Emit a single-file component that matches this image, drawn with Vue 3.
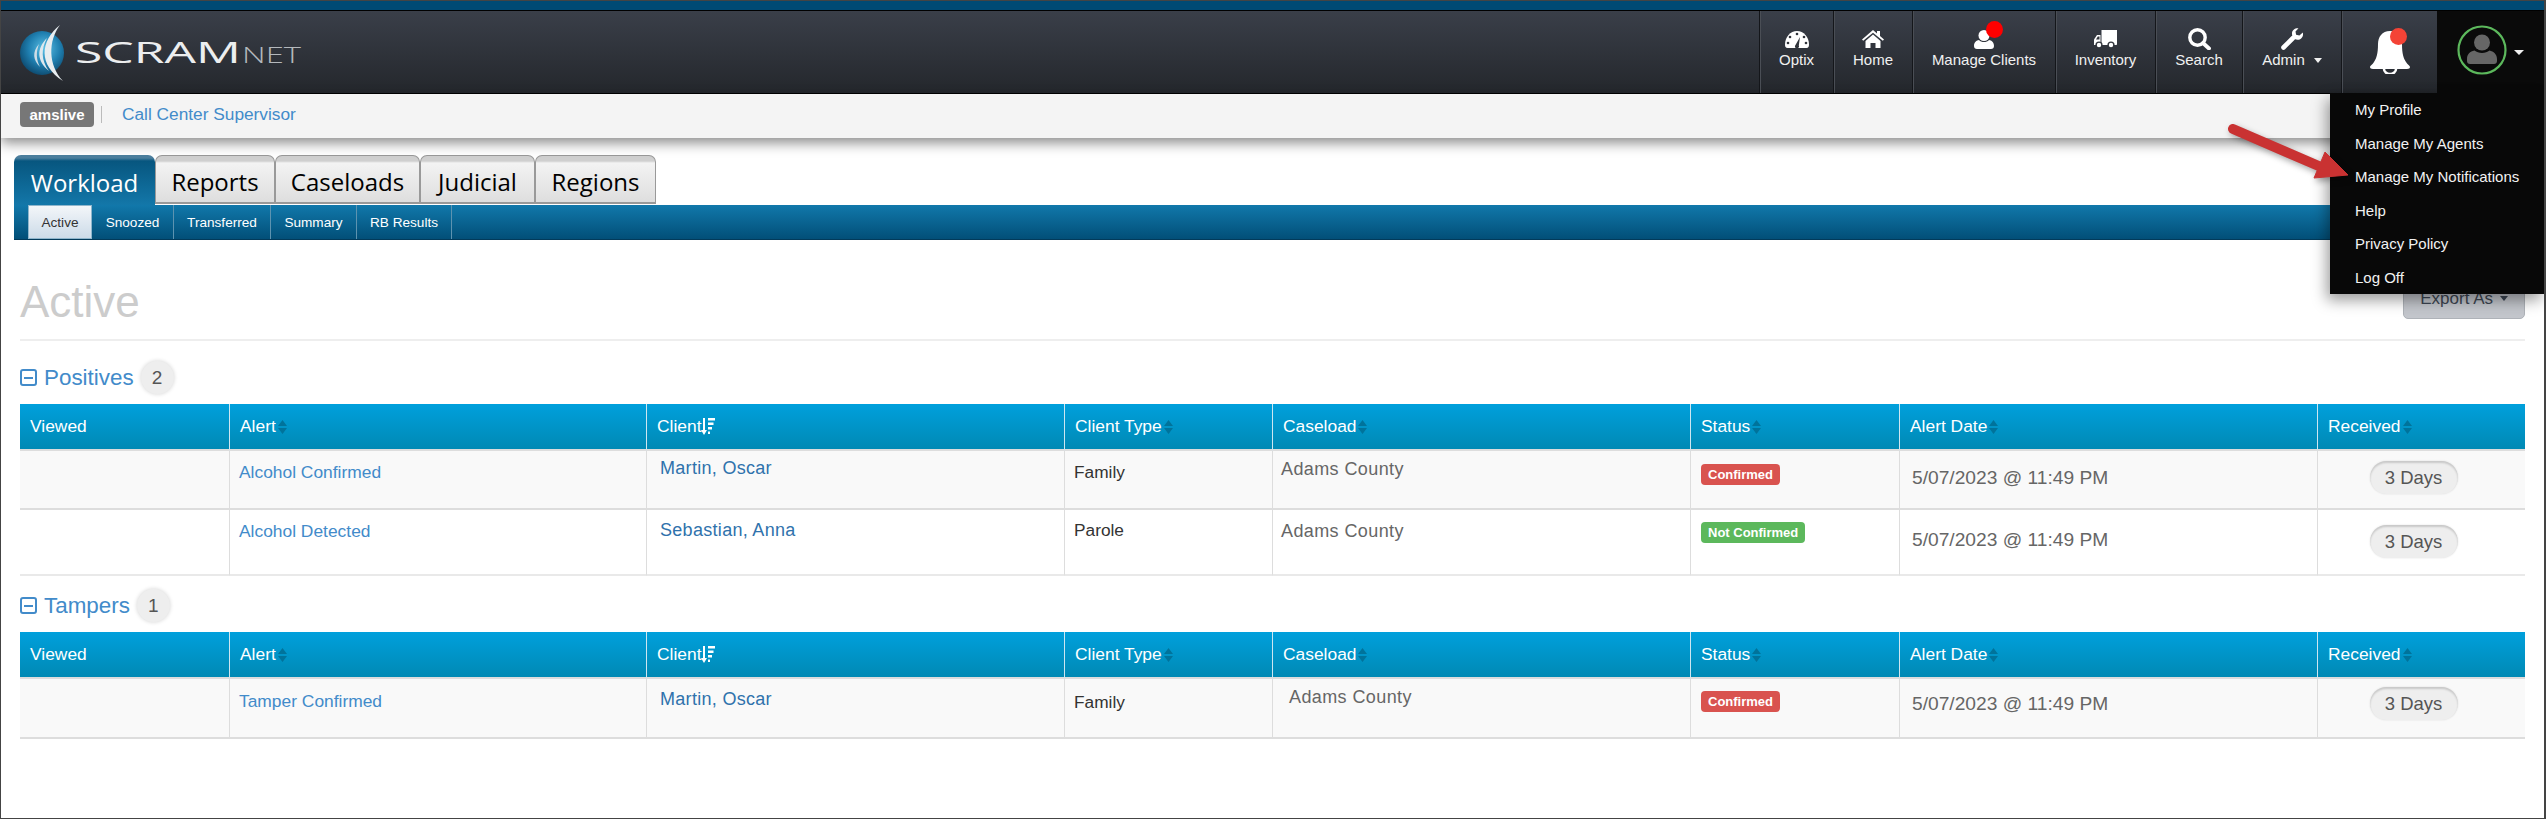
<script setup>
const navItems = [
  { icon: 'gauge', label: 'Optix' },
  { icon: 'home', label: 'Home' },
  { icon: 'user', label: 'Manage Clients', dot: true },
  { icon: 'truck', label: 'Inventory' },
  { icon: 'search', label: 'Search' },
  { icon: 'wrench', label: 'Admin', caret: true }
]
const tabs = ['Workload', 'Reports', 'Caseloads', 'Judicial', 'Regions']
const subTabs = ['Active', 'Snoozed', 'Transferred', 'Summary', 'RB Results']
const menu = ['My Profile', 'Manage My Agents', 'Manage My Notifications', 'Help', 'Privacy Policy', 'Log Off']
const columns = [
  { label: 'Viewed', width: 209 },
  { label: 'Alert', width: 417, sort: 'both' },
  { label: 'Client', width: 418, sort: 'desc' },
  { label: 'Client Type', width: 208, sort: 'both' },
  { label: 'Caseload', width: 418, sort: 'both' },
  { label: 'Status', width: 209, sort: 'both' },
  { label: 'Alert Date', width: 418, sort: 'both' },
  { label: 'Received', width: 208, sort: 'both' }
]
const sections = [
  {
    title: 'Positives', count: 2, cls: 'first',
    rows: [
      { cls: 'r1', alert: 'Alcohol Confirmed', client: 'Martin, Oscar', type: 'Family', status: 'Confirmed', ok: false },
      { cls: 'r2', alert: 'Alcohol Detected', client: 'Sebastian, Anna', type: 'Parole', status: 'Not Confirmed', ok: true }
    ]
  },
  {
    title: 'Tampers', count: 1, cls: 'second',
    rows: [
      { cls: 'r3', alert: 'Tamper Confirmed', client: 'Martin, Oscar', type: 'Family', status: 'Confirmed', ok: false }
    ]
  }
]
</script>

<template>
  <div class="frame">
    <div class="strip"></div>
    <header class="topbar">
      <div class="logo">
        <svg width="290" height="62" viewBox="0 0 290 62">
          <defs>
            <radialGradient id="globe" cx="0.55" cy="0.4" r="0.65">
              <stop offset="0" stop-color="#5cc0e6" />
              <stop offset="0.55" stop-color="#1f7fb0" />
              <stop offset="1" stop-color="#0b4468" />
            </radialGradient>
          </defs>
          <circle cx="22" cy="32" r="22" fill="url(#globe)" />
          <path d="M40 4 C20 20 18 44 43 60 C28 44 28 20 40 4Z" fill="#e8edf0" />
          <path d="M27 17 C16 28 17 40 29 50 C21 39 21 28 27 17Z" fill="#dfe8ee" />
          <path d="M19 23 C12 31 13 39 20 46 C16 38 16 31 19 23Z" fill="#cfdde6" />
          <text x="55" y="42" class="logo-main" textLength="166" lengthAdjust="spacingAndGlyphs">SCRAM</text>
          <text x="222" y="42" class="logo-sub" textLength="59" lengthAdjust="spacingAndGlyphs">NET</text>
        </svg>
      </div>
      <nav class="nav">
        <a v-for="item in navItems" :key="item.label" class="nav-item">
          <span class="nav-icon">
            <svg v-if="item.icon === 'gauge'" width="24" height="17" viewBox="0 0 24 17">
              <path d="M0 13.5C0 6 5.4 0 12 0s12 6 12 13.5c0 2-.6 3.500-2.500 3.500H2.500C.6 17 0 15.500 0 13.500Z" fill="#fff" />
              <circle cx="5" cy="6" r="1.300" fill="#30343b" /><circle cx="12" cy="3" r="1.300" fill="#30343b" />
              <circle cx="19" cy="6" r="1.300" fill="#30343b" /><circle cx="3" cy="12" r="1.300" fill="#30343b" />
              <circle cx="21" cy="12" r="1.300" fill="#30343b" />
              <path d="M15 6 L13.800 14.500 A2 2 0 1 1 10.500 14Z" fill="#30343b" />
            </svg>
            <svg v-else-if="item.icon === 'home'" width="22" height="18" viewBox="0 0 22 18">
              <path d="M0 9.500 11 0l4 3.400V1h3v5l4 3.500-1.200 1.300L11 2.700 1.200 10.800Z" fill="#fff" />
              <path d="M3.500 11 11 4.600 18.500 11v7h-5v-5h-5v5h-5Z" fill="#fff" />
            </svg>
            <svg v-else-if="item.icon === 'user'" width="20" height="19" viewBox="0 0 20 19">
              <circle cx="10" cy="5.500" r="5.500" fill="#fff" />
              <path d="M0 16c0-4 2.500-5.500 5-6 1.200 1.400 3 2 5 2s3.800-.6 5-2c2.500.5 5 2 5 6 0 2-1.200 3-3 3H3c-1.800 0-3-1-3-3Z" fill="#fff" />
            </svg>
            <svg v-else-if="item.icon === 'truck'" width="24" height="19" viewBox="0 0 24 19">
              <path d="M7.500 0H23v14c0 .6-.4 1-1 1H7.500Z" fill="#fff" />
              <path d="M6.500 5H3L0 9.500V15h6.500Z" fill="#fff" />
              <circle cx="5" cy="15" r="3.600" fill="#30343b" /><circle cx="5" cy="15" r="2.200" fill="#fff" />
              <circle cx="17" cy="15" r="3.600" fill="#30343b" /><circle cx="17" cy="15" r="2.200" fill="#fff" />
              <path d="M2 9.500 3.800 6.500H5.500V9.500Z" fill="#30343b" />
            </svg>
            <svg v-else-if="item.icon === 'search'" width="23" height="22" viewBox="0 0 23 22">
              <circle cx="9.500" cy="9.500" r="7.700" fill="none" stroke="#fff" stroke-width="3.400" />
              <path d="M15 15 21 20.500" stroke="#fff" stroke-width="3.800" stroke-linecap="round" />
            </svg>
            <svg v-else-if="item.icon === 'wrench'" width="23" height="22" viewBox="0 0 23 22">
              <path d="M2.500 19.500 12 10" stroke="#fff" stroke-width="4.600" stroke-linecap="round" />
              <path d="M11 5.500C11 2 14 0 17.500 0.300L14.500 3.500l.6 3.300 3.300.6L21.800 4.500C23 8.500 20 12 16.500 11.800 13 11.500 11 9 11 5.500Z" fill="#fff" />
            </svg>
            <span v-if="item.dot" class="dot"></span>
          </span>
          <span class="nav-label">{{ item.label }}<i v-if="item.caret" class="caret"></i></span>
        </a>
        <a class="nav-item bell-item">
          <span class="bell-wrap">
            <svg width="42" height="45" viewBox="0 0 42 45">
              <path d="M15 40a6 5 0 0 0 12 0" fill="none" stroke="#fff" stroke-width="2.500" />
              <path d="M21 2C13 2 9 8 9 15c0 10-1.500 14-4 18-1.500 2.500-4 3.500-4 5 0 1.300 1 2 3 2h34c2 0 3-.7 3-2 0-1.500-2.500-2.500-4-5-2.500-4-4-8-4-18 0-7-4-13-12-13Z" fill="#fff" />
            </svg>
            <span class="bell-dot"></span>
          </span>
        </a>
        <div class="user-item">
          <svg width="50" height="50" viewBox="0 0 50 50">
            <circle cx="25" cy="25" r="23.500" fill="none" stroke="#5cb85c" stroke-width="2.200" />
            <circle cx="25" cy="17.500" r="8" fill="#666" />
            <path d="M10 34c0-5 3-7.500 7.500-8.500 2 1.600 4.500 2.500 7.500 2.500s5.500-.9 7.500-2.500C36.500 26.500 40 29 40 34v2c0 2-1.200 3-3 3H13c-1.800 0-3-1-3-3Z" fill="#666" />
          </svg>
          <i class="caret user-caret"></i>
          <ul class="menu">
            <li v-for="m in menu" :key="m">{{ m }}</li>
          </ul>
        </div>
      </nav>
    </header>

    <div class="subbar">
      <span class="env">amslive</span>
      <span class="pipe"></span>
      <a class="role">Call Center Supervisor</a>
    </div>

    <div class="tabs">
      <a v-for="(t, i) in tabs" :key="t" class="tab" :class="{ on: i === 0 }">{{ t }}</a>
    </div>
    <div class="subnav">
      <a v-for="(t, i) in subTabs" :key="t" class="subtab" :class="{ on: i === 0 }">{{ t }}</a>
    </div>

    <main class="page">
      <div class="title-row">
        <h1>Active</h1>
        <button class="export">Export As <i class="caret dark"></i></button>
      </div>

      <section v-for="s in sections" :key="s.title" :class="s.cls">
        <div class="group">
          <span class="minus"></span>
          <span class="group-title">{{ s.title }}</span>
          <span class="count">{{ s.count }}</span>
        </div>
        <table>
          <colgroup>
            <col v-for="c in columns" :key="c.label" :style="{ width: c.width + 'px' }" />
          </colgroup>
          <thead>
            <tr>
              <th v-for="c in columns" :key="c.label">
                <span>{{ c.label }}</span>
                <svg v-if="c.sort === 'both'" class="sort" width="9" height="16" viewBox="0 0 9 16">
                  <path d="M4.500 1 9 7H0ZM4.500 15 0 9h9Z" fill="#00739b" />
                </svg>
                <svg v-else-if="c.sort === 'desc'" class="sort desc" width="14" height="17" viewBox="0 0 14 17">
                  <path d="M2 0h2v12h2l-3 5-3-5h2Z" fill="#fff" />
                  <path d="M7 0h7v2.500H7ZM7 4.500h5.500V7H7ZM7 9h4v2.500H7ZM7 13.500h2V16H7Z" fill="#fff" />
                </svg>
              </th>
            </tr>
          </thead>
          <tbody>
            <tr v-for="r in s.rows" :key="r.alert" :class="r.cls">
              <td></td>
              <td class="c-alert"><a>{{ r.alert }}</a></td>
              <td class="c-client"><a>{{ r.client }}</a></td>
              <td class="c-type">{{ r.type }}</td>
              <td class="c-load">Adams County</td>
              <td class="c-status"><span class="status" :class="r.ok ? 'ok' : 'bad'">{{ r.status }}</span></td>
              <td class="c-date">5/07/2023 @ 11:49 PM</td>
              <td class="c-recv"><span class="pill">3 Days</span></td>
            </tr>
          </tbody>
        </table>
      </section>
    </main>

    <svg class="arrow" width="134" height="72" viewBox="0 0 134 72">
      <path d="M9 11 L104 52" stroke="#c93232" stroke-width="10" stroke-linecap="round" />
      <path d="M101 34 L124 57 L90 60Z" fill="#c93232" stroke="#c93232" stroke-width="1" stroke-linejoin="round" />
    </svg>
  </div>
</template>

<style scoped>
.frame {
  position: relative;
  width: 2546px;
  height: 819px;
  box-sizing: border-box;
  border: 1px solid #444;
  border-right-width: 2px;
  background: #fff;
  font-family: "Liberation Sans", Arial, sans-serif;
  overflow: hidden;
}
.strip {
  height: 9px;
  background: #004a74;
  border-bottom: 1px solid #000;
}
.topbar {
  display: flex;
  justify-content: space-between;
  height: 83px;
  box-sizing: border-box;
  background: linear-gradient(#3a3f49, #24272c);
  border-bottom: 1px solid #000;
}
.logo {
  padding: 10px 0 0 19px;
}
.logo-main {
  font-family: "Open Sans", sans-serif;
  font-weight: 400;
  font-size: 29px;
  fill: #eceeef;
}
.logo-sub {
  font-family: "Open Sans", sans-serif;
  font-weight: 300;
  font-size: 22px;
  fill: #b4b8bc;
}
.nav {
  display: flex;
  height: 82px;
}
.nav-item {
  display: flex;
  flex-direction: column;
  align-items: center;
  width: 74px;
  padding: 17px 0 0;
  box-sizing: border-box;
  border-left: 1px solid #14161a;
  box-shadow: inset 1px 0 0 #4a4e55;
  color: #f0f0f0;
}
.nav-item:nth-child(2) { width: 79px; }
.nav-item:nth-child(3) { width: 143px; }
.nav-item:nth-child(4) { width: 100px; }
.nav-item:nth-child(5) { width: 87px; }
.nav-item:nth-child(6) { width: 99px; }
.nav-icon {
  position: relative;
  display: flex;
  align-items: center;
  justify-content: center;
  height: 22px;
}
.nav-label {
  display: flex;
  align-items: center;
  height: 20px;
  font-size: 15px;
  line-height: 20px;
  white-space: nowrap;
}
.dot {
  position: absolute;
  left: 12px;
  top: -7px;
  width: 17px;
  height: 17px;
  border-radius: 50%;
  background: #f00;
}
.caret {
  display: inline-block;
  width: 0;
  height: 0;
  margin-left: 9px;
  border-left: 4.500px solid transparent;
  border-right: 4.500px solid transparent;
  border-top: 5px solid #f0f0f0;
}
.nav-item.bell-item {
  width: 96px;
  padding: 18px 0 0;
}
.bell-wrap {
  position: relative;
  display: block;
  height: 45px;
}
.bell-dot {
  position: absolute;
  left: 21px;
  top: -1px;
  width: 17px;
  height: 17px;
  border-radius: 50%;
  background: #f44336;
}
.user-item {
  position: relative;
  display: flex;
  align-items: flex-start;
  width: 107px;
  height: 83px;
  box-sizing: border-box;
  padding: 14px 0 0 20px;
  background: #0a0a0a;
}
.user-caret {
  margin: 25px 0 0 7px;
  border-left-width: 5px;
  border-right-width: 5px;
}
.menu {
  position: absolute;
  z-index: 5;
  top: 82px;
  right: 0;
  width: 214px;
  margin: 0;
  padding: 0;
  list-style: none;
  background: #080808;
  box-shadow: -3px 6px 14px rgba(0, 0, 0, 0.4);
}
.menu li {
  height: 33.500px;
  padding-left: 25px;
  font-size: 15px;
  line-height: 33.500px;
  color: #f2f2f2;
}
.subbar {
  display: flex;
  align-items: center;
  height: 44px;
  box-sizing: border-box;
  padding: 0 0 3px 19px;
  background: #f4f4f4;
  box-shadow: 0 5px 12px rgba(0, 0, 0, 0.45);
  position: relative;
}
.env {
  width: 74px;
  height: 25px;
  border-radius: 4px;
  background: #777;
  color: #fff;
  font-size: 15px;
  font-weight: 700;
  line-height: 25px;
  text-align: center;
}
.pipe {
  width: 1px;
  height: 17px;
  margin: 0 20px 0 7px;
  background: #bbb;
}
.role {
  font-size: 17.300px;
  color: #428bca;
}
.tabs {
  display: flex;
  height: 50px;
  margin-top: 17px;
  padding-left: 13px;
}
.tab {
  display: flex;
  align-items: center;
  justify-content: center;
  width: 120px;
  height: 49px;
  box-sizing: border-box;
  padding-top: 4px;
  border: 1px solid #999;
  border-bottom-width: 2px;
  border-radius: 7px 7px 0 0;
  background: linear-gradient(#cfcfcf 0, #cfcfcf 5px, #f3f3f3 7px, #dedede 100%);
  color: #000;
  font-family: "Open Sans", sans-serif;
  font-size: 24px;
  font-weight: 500;
}
.tab:nth-child(1) { width: 141px; }
.tab:nth-child(2) { width: 120px; }
.tab:nth-child(3) { width: 145px; }
.tab:nth-child(4) { width: 115px; }
.tab:nth-child(5) { width: 121px; }
.tab.on {
  height: 50px;
  border: 0;
  background: linear-gradient(#4c7f9e 0, #4c7f9e 3px, #07567f 6px, #1377a9 100%);
  color: #fff;
}
.subnav {
  display: flex;
  height: 35px;
  margin-left: 13px;
  margin-right: 19px;
  padding-left: 14px;
  background: linear-gradient(#1178ab, #024f78);
  border-bottom: 1px solid #023a5a;
  box-sizing: border-box;
}
.subtab {
  display: flex;
  align-items: center;
  justify-content: center;
  width: 82px;
  border-right: 1px solid #5d93b0;
  color: #fff;
  font-size: 13.600px;
  box-sizing: border-box;
}
.subtab:nth-child(1) { width: 64px; }
.subtab:nth-child(2) { width: 82px; }
.subtab:nth-child(3) { width: 97px; }
.subtab:nth-child(4) { width: 86px; }
.subtab:nth-child(5) { width: 95px; }
.subtab.on {
  border: 1px solid #8fb6cc;
  background: linear-gradient(#f3f6f9, #ccdbe8);
  color: #333;
}
.page {
  padding: 0 19px;
}
.title-row {
  display: flex;
  justify-content: space-between;
  align-items: flex-end;
  padding: 37px 0 12px;
  border-bottom: 2px solid #eee;
}
h1 {
  margin: 0;
  font-size: 44px;
  font-weight: 400;
  line-height: 50px;
  color: #ccc;
}
.export {
  width: 122px;
  height: 41px;
  margin-bottom: 8px;
  padding: 0;
  border: 1px solid #aeb2b8;
  border-radius: 5px;
  background: #c3c6cc;
  color: #3d4653;
  font-family: inherit;
  font-size: 17px;
}
.caret.dark {
  margin-left: 2px;
  vertical-align: 3px;
  border-top-color: #3d4653;
}
.group {
  display: flex;
  align-items: center;
  height: 33px;
  margin-bottom: 10px;
}
.first .group { margin-top: 20px; }
.second .group { margin-top: 13px; }
.minus {
  position: relative;
  width: 17px;
  height: 17px;
  box-sizing: border-box;
  border: 2px solid #428bca;
  border-radius: 3px;
}
.minus::after {
  content: "";
  position: absolute;
  left: 2px;
  right: 2px;
  top: 5.500px;
  height: 2px;
  background: #428bca;
}
.group-title {
  margin-left: 7px;
  font-size: 22.400px;
  color: #428bca;
}
.count {
  width: 33px;
  height: 33px;
  margin-left: 7px;
  border-radius: 50%;
  background: #eee;
  box-shadow: 0 0 4px rgba(0, 0, 0, 0.18);
  color: #555;
  font-size: 19px;
  line-height: 33px;
  text-align: center;
}
table {
  width: 2505px;
  table-layout: fixed;
  border-collapse: separate;
  border-spacing: 0;
}
th {
  height: 47px;
  box-sizing: border-box;
  padding: 0 0 0 10px;
  background: linear-gradient(#00a0dc, #0089b4);
  border-bottom: 2px solid #ddd;
  border-left: 1px solid #cde6f1;
  color: #fff;
  font-size: 17.400px;
  font-weight: 400;
  text-align: left;
}
th:first-child { border-left: 0; }
.sort {
  margin-left: 2px;
  vertical-align: -3px;
}
.sort.desc { margin-left: 0; }
td {
  box-sizing: border-box;
  padding: 0 0 0 10px;
  vertical-align: top;
  border-left: 1px solid #ddd;
  border-bottom: 2px solid #ddd;
  font-size: 17px;
  line-height: 20px;
}
td:first-child { border-left: 0; }
.r1 td { height: 59px; background: #f9f9f9; }
.r2 td { height: 66px; border-bottom-color: #e9e9e9; }
.r3 td { height: 60px; background: #f9f9f9; }
.c-alert { font-size: 17.400px; padding-left: 9px; }
.c-alert a { color: #428bca; }
.c-client { padding-left: 13px; font-size: 18px; letter-spacing: 0.300px; }
.c-client a { color: #2f72ac; }
.c-type { color: #333; padding-left: 9px; font-size: 17.300px; }
.c-load { padding-left: 8px; font-size: 18px; letter-spacing: 0.400px; color: #666; }
.c-date { padding-left: 12px; font-size: 19.200px; color: #666; }
.c-recv { text-align: center; padding: 0 16px 0 0; }
.status {
  display: inline-block;
  height: 21px;
  padding: 0 7px;
  border-radius: 4px;
  color: #fff;
  font-size: 13px;
  font-weight: 700;
  line-height: 21px;
}
.status.bad { background: #d9534f; }
.status.ok { background: #5cb85c; }
.pill {
  display: inline-block;
  width: 88px;
  height: 33px;
  border-radius: 17px;
  background: #eee;
  box-shadow: inset 0 2px 2px rgba(0, 0, 0, 0.16), 0 0 2px rgba(0, 0, 0, 0.12);
  color: #555;
  font-size: 18.500px;
  line-height: 33px;
}
.r1 .c-alert, .r1 .c-type { padding-top: 11px; }
.r1 .c-client { padding-top: 7px; }
.r1 .c-load { padding-top: 8px; }
.r1 .c-status { padding-top: 13px; }
.r1 .c-date { padding-top: 17px; }
.r1 .c-recv { padding-top: 10px; }
.r2 .c-alert, .r2 .c-load { padding-top: 11px; }
.r2 .c-client, .r2 .c-type { padding-top: 10px; }
.r2 .c-status { padding-top: 12px; }
.r2 .c-date { padding-top: 20px; }
.r2 .c-recv { padding-top: 15px; }
.r3 .c-alert { padding-top: 12px; }
.r3 .c-client { padding-top: 10px; }
.r3 .c-type { padding-top: 13px; }
.r3 .c-load { padding-top: 8px; padding-left: 16px; }
.r3 .c-status { padding-top: 12px; }
.r3 .c-date { padding-top: 15px; }
.r3 .c-recv { padding-top: 8px; }
.arrow {
  position: absolute;
  z-index: 6;
  left: 2223px;
  top: 117px;
  filter: drop-shadow(2px 3px 3px rgba(0, 0, 0, 0.35));
}
</style>

<style>
html, body { margin: 0; overflow: hidden; background: #fff; }
</style>
